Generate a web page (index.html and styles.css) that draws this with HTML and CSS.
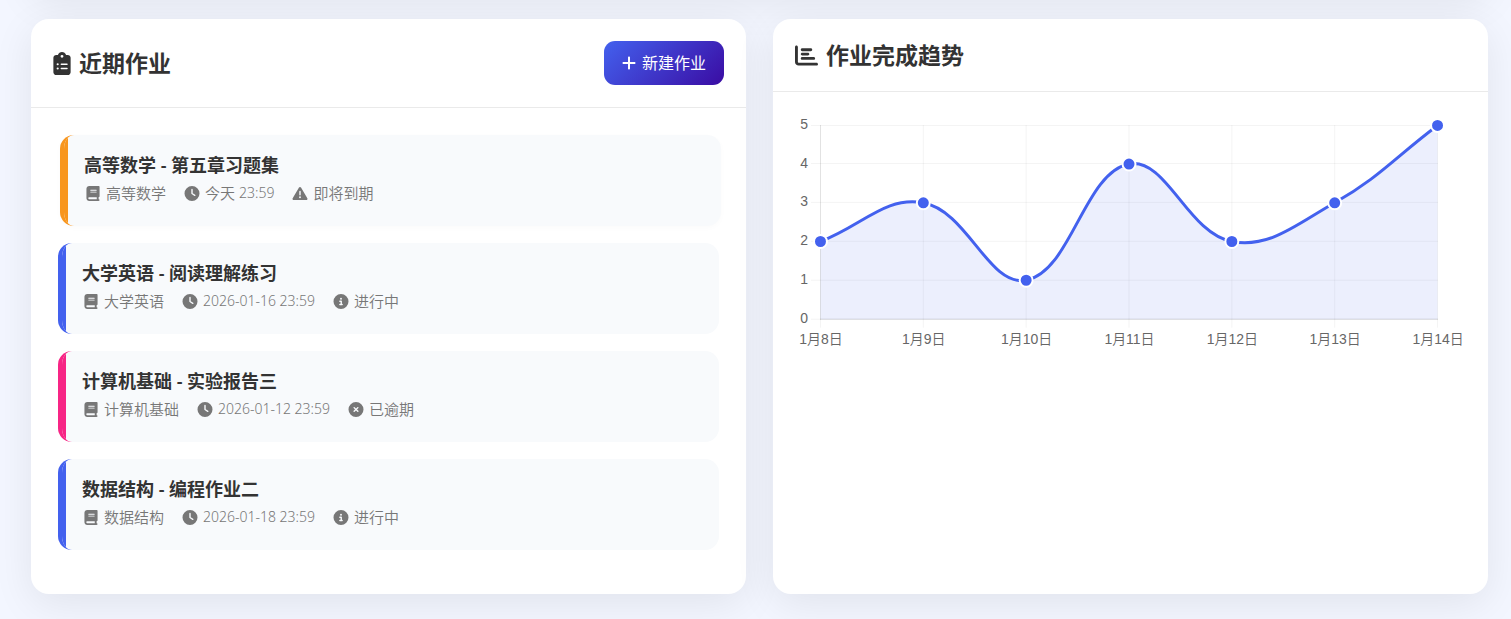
FILE: index.html
```html
<!DOCTYPE html>
<html lang="zh-CN">
<head>
<meta charset="utf-8">
<meta name="viewport" content="width=device-width, initial-scale=1">
<title>作业管理</title>
<link rel="stylesheet" href="styles.css">
</head>
<body>
<svg class="sprite" aria-hidden="true">
  <symbol id="i-book" viewBox="0 0 448 512"><path d="M96 0C43 0 0 43 0 96V416c0 53 43 96 96 96H384h32c17.7 0 32-14.3 32-32s-14.3-32-32-32V384c17.7 0 32-14.3 32-32V32c0-17.7-14.3-32-32-32H384 96zm0 384H352v64H96c-17.7 0-32-14.3-32-32s14.3-32 32-32zm32-240c0-8.8 7.2-16 16-16H336c8.8 0 16 7.2 16 16s-7.2 16-16 16H144c-8.8 0-16-7.2-16-16zm16 48H336c8.8 0 16 7.2 16 16s-7.2 16-16 16H144c-8.8 0-16-7.2-16-16s7.2-16 16-16z"/></symbol>
  <symbol id="i-clock" viewBox="0 0 512 512"><path d="M256 0a256 256 0 1 1 0 512A256 256 0 1 1 256 0zM232 120V256c0 8 4 15.500 10.700 20l96 64c11 7.400 25.900 4.400 33.300-6.700s4.400-25.900-6.700-33.300L280 243.200V120c0-13.300-10.700-24-24-24s-24 10.700-24 24z"/></symbol>
  <symbol id="i-warn" viewBox="0 0 512 512"><path d="M256 32c14.200 0 27.300 7.500 34.500 19.800l216 368c7.300 12.400 7.300 27.700 .2 40.100S486.300 480 472 480H40c-14.300 0-27.600-7.700-34.700-20.100s-7-27.800 .2-40.100l216-368C228.700 39.500 241.800 32 256 32zm0 128c-13.300 0-24 10.700-24 24V296c0 13.300 10.700 24 24 24s24-10.700 24-24V184c0-13.300-10.700-24-24-24zm32 224a32 32 0 1 0 -64 0 32 32 0 1 0 64 0z"/></symbol>
  <symbol id="i-info" viewBox="0 0 512 512"><path d="M256 512A256 256 0 1 0 256 0a256 256 0 1 0 0 512zM216 336h24V272H216c-13.300 0-24-10.700-24-24s10.700-24 24-24h48c13.300 0 24 10.700 24 24v88h8c13.300 0 24 10.700 24 24s-10.700 24-24 24H216c-13.300 0-24-10.700-24-24s10.700-24 24-24zm40-208a32 32 0 1 1 0 64 32 32 0 1 1 0-64z"/></symbol>
  <symbol id="i-xmark" viewBox="0 0 512 512"><path d="M256 512A256 256 0 1 0 256 0a256 256 0 1 0 0 512zM175 175c9.400-9.400 24.600-9.400 33.900 0l47 47 47-47c9.400-9.400 24.600-9.400 33.900 0s9.400 24.600 0 33.900l-47 47 47 47c9.400 9.400 9.400 24.600 0 33.900s-24.600 9.400-33.900 0l-47-47-47 47c-9.400 9.400-24.600 9.400-33.900 0s-9.400-24.600 0-33.900l47-47-47-47c-9.400-9.400-9.400-24.600 0-33.900z"/></symbol>
</svg>

<section class="previous-panel" aria-hidden="true"></section>

<main class="panels">
  <section class="card">
    <header class="card-header">
      <h2 class="card-title">
        <svg class="icon-clipboard" viewBox="0 0 384 512" aria-hidden="true"><path d="M192 0c-41.8 0-77.4 26.7-90.5 64H64C28.7 64 0 92.7 0 128V448c0 35.3 28.7 64 64 64H320c35.3 0 64-28.7 64-64V128c0-35.300-28.700-64-64-64H282.500C269.400 26.700 233.800 0 192 0zm0 64a32 32 0 1 1 0 64 32 32 0 1 1 0-64zM72 272a24 24 0 1 1 48 0 24 24 0 1 1 -48 0zm104-16H304c8.800 0 16 7.200 16 16s-7.200 16-16 16H176c-8.800 0-16-7.200-16-16s7.200-16 16-16zM72 368a24 24 0 1 1 48 0 24 24 0 1 1 -48 0zm88 0c0-8.800 7.200-16 16-16H304c8.800 0 16 7.200 16 16s-7.200 16-16 16H176c-8.800 0-16-7.200-16-16z"/></svg>
        近期作业
      </h2>
      <button class="btn-primary" type="button">
        <svg class="icon-plus" viewBox="0 32 448 448" aria-hidden="true"><path d="M256 80c0-17.700-14.300-32-32-32s-32 14.300-32 32V224H48c-17.700 0-32 14.300-32 32s14.300 32 32 32H192V432c0 17.700 14.300 32 32 32s32-14.300 32-32V288H400c17.700 0 32-14.300 32-32s-14.300-32-32-32H256V80z"/></svg>
        新建作业
      </button>
    </header>
    <ul class="homework-list">
      <li class="homework homework-urgent is-active">
        <h3 class="homework-title">高等数学 - 第五章习题集</h3>
        <div class="homework-meta">
          <span class="meta"><svg class="icon" aria-hidden="true"><use href="#i-book"/></svg>高等数学</span>
          <span class="meta"><svg class="icon" aria-hidden="true"><use href="#i-clock"/></svg>今天<time>23:59</time></span>
          <span class="meta"><svg class="icon" aria-hidden="true"><use href="#i-warn"/></svg>即将到期</span>
        </div>
      </li>
      <li class="homework">
        <h3 class="homework-title">大学英语 - 阅读理解练习</h3>
        <div class="homework-meta">
          <span class="meta"><svg class="icon" aria-hidden="true"><use href="#i-book"/></svg>大学英语</span>
          <span class="meta"><svg class="icon" aria-hidden="true"><use href="#i-clock"/></svg><time>2026-01-16 23:59</time></span>
          <span class="meta"><svg class="icon" aria-hidden="true"><use href="#i-info"/></svg>进行中</span>
        </div>
      </li>
      <li class="homework homework-overdue">
        <h3 class="homework-title">计算机基础 - 实验报告三</h3>
        <div class="homework-meta">
          <span class="meta"><svg class="icon" aria-hidden="true"><use href="#i-book"/></svg>计算机基础</span>
          <span class="meta"><svg class="icon" aria-hidden="true"><use href="#i-clock"/></svg><time>2026-01-12 23:59</time></span>
          <span class="meta"><svg class="icon" aria-hidden="true"><use href="#i-xmark"/></svg>已逾期</span>
        </div>
      </li>
      <li class="homework">
        <h3 class="homework-title">数据结构 - 编程作业二</h3>
        <div class="homework-meta">
          <span class="meta"><svg class="icon" aria-hidden="true"><use href="#i-book"/></svg>数据结构</span>
          <span class="meta"><svg class="icon" aria-hidden="true"><use href="#i-clock"/></svg><time>2026-01-18 23:59</time></span>
          <span class="meta"><svg class="icon" aria-hidden="true"><use href="#i-info"/></svg>进行中</span>
        </div>
      </li>
    </ul>
  </section>

  <section class="card">
    <header class="card-header">
      <h2 class="card-title">
        <svg class="icon-chart" viewBox="0 0 512 512" aria-hidden="true"><path d="M32 32c17.700 0 32 14.300 32 32V400c0 8.800 7.200 16 16 16H480c17.700 0 32 14.300 32 32s-14.300 32-32 32H80c-44.200 0-80-35.800-80-80V64C0 46.300 14.300 32 32 32zm96 96c0-17.700 14.300-32 32-32l192 0c17.700 0 32 14.300 32 32s-14.300 32-32 32l-192 0c-17.700 0-32-14.300-32-32zm32 64H288c17.700 0 32 14.300 32 32s-14.300 32-32 32H160c-17.700 0-32-14.300-32-32s14.300-32 32-32zm0 96H416c17.700 0 32 14.300 32 32s-14.300 32-32 32H160c-17.700 0-32-14.300-32-32s14.300-32 32-32z"/></svg>
        作业完成趋势
      </h2>
    </header>
    <div class="chart-body">
      <svg class="chart" viewBox="0 0 672 236" role="img" aria-label="作业完成趋势折线图">
        <path class="grid" d="M16 11.500H644M16 49.500H644M16 88.500H644M16 127.500H644M16 166.500H644M16 205.500H644M128.500 11V214M231.500 11V214M334.500 11V214M437.500 11V214M540.500 11V214M643.500 11V214M25.500 206V214"/>
        <path class="axis" d="M25.500 11V206M25 205.500H644"/>
        <path class="area" d="M25.500 127.700C66.700 112.200 90.600 81.800 128.500 88.900C173 97.300 194.100 173.500 231.500 166.500C276.500 158 289.500 58.600 334.500 50.100C371.900 43.100 393 119.300 437.500 127.700C475.400 134.800 502.600 110.300 540.500 88.900C585 63.800 602.300 42.300 643.500 11.500V205.500H25.500Z"/>
        <path class="line" d="M25.500 127.700C66.700 112.200 90.600 81.800 128.500 88.900C173 97.300 194.100 173.500 231.500 166.500C276.500 158 289.500 58.600 334.500 50.100C371.900 43.100 393 119.300 437.500 127.700C475.400 134.800 502.600 110.300 540.500 88.900C585 63.800 602.300 42.300 643.500 11.500"/>
        <g class="points">
          <circle cx="25.500" cy="127.700" r="6.500"/><circle cx="128.500" cy="88.900" r="6.500"/><circle cx="231.500" cy="166.500" r="6.500"/><circle cx="334.500" cy="50.100" r="6.500"/><circle cx="437.500" cy="127.700" r="6.500"/><circle cx="540.500" cy="88.900" r="6.500"/><circle cx="643.500" cy="11.500" r="6.500"/>
        </g>
        <g class="tick tick-y">
          <text x="13" y="15">5</text><text x="13" y="54">4</text><text x="13" y="92">3</text><text x="13" y="131">2</text><text x="13" y="170">1</text><text x="13" y="209">0</text>
        </g>
        <g class="tick tick-x">
          <text x="26" y="230">1月8日</text><text x="129" y="230">1月9日</text><text x="232" y="230">1月10日</text><text x="335" y="230">1月11日</text><text x="438" y="230">1月12日</text><text x="541" y="230">1月13日</text><text x="644" y="230">1月14日</text>
        </g>
      </svg>
    </div>
  </section>
</main>
</body>
</html>
```
FILE: styles.css
```css
:root {
  --primary: #4361ee;
  --primary-dark: #3a0ca3;
  --warning: #f8961e;
  --danger: #f72585;
  --text: #333;
  --muted: #777;
  --line: #eaeaea;
  --shadow: 0 10px 40px rgba(0, 0, 0, 0.08);
}

* {
  box-sizing: border-box;
}

body {
  margin: 0;
  padding: 0 23px 25px 31px;
  overflow-x: hidden;
  background: #f3f6ff;
  color: var(--text);
  font-family: "Noto Sans", "Noto Sans CJK SC", sans-serif;
}

.sprite {
  display: none;
}

/* Lower edge of the panel scrolled above the viewport */
.previous-panel {
  height: 72px;
  margin-top: -80px;
  border-radius: 18px;
  background: #fff;
  box-shadow: var(--shadow);
}

.panels {
  display: grid;
  grid-template-columns: 1fr 1fr;
  gap: 27px;
  margin-top: 27px;
}

.card {
  border-radius: 18px;
  background: #fff;
  box-shadow: var(--shadow);
}

.card-header {
  display: flex;
  align-items: center;
  justify-content: space-between;
  padding: 22px;
  border-bottom: 1px solid var(--line);
}

.card-title {
  display: flex;
  align-items: center;
  gap: 8px;
  margin: 0;
  font-size: 23px;
  font-weight: 600;
  line-height: 28px;
}

.icon-clipboard,
.icon-chart {
  height: 23px;
  fill: currentColor;
}

.icon-clipboard {
  width: 18px;
}

.icon-chart {
  width: 23px;
}

.btn-primary {
  display: flex;
  align-items: center;
  gap: 6px;
  padding: 10px 18px;
  border: 0;
  border-radius: 11px;
  background: linear-gradient(135deg, var(--primary), var(--primary-dark));
  color: #fff;
  font-family: inherit;
  font-size: 16px;
  font-weight: 400;
  line-height: 24px;
  cursor: pointer;
}

.icon-plus {
  width: 14px;
  height: 14px;
  fill: currentColor;
}

.homework-list {
  margin: 0;
  padding: 27px;
  list-style: none;
}

.homework {
  --accent: var(--primary);
  position: relative;
  overflow: hidden;
  margin-bottom: 17px;
  padding: 17px 16px 22px 20px;
  border-left: 4px solid var(--accent);
  border-radius: 14px;
  background: #f8fafc;
}

/* Second, straight-edged half of the accent bar */
.homework::before {
  content: "";
  position: absolute;
  top: 0;
  bottom: 0;
  left: 0;
  width: 4px;
  background: var(--accent);
}

.homework-urgent {
  --accent: var(--warning);
}

.homework-overdue {
  --accent: var(--danger);
}

.homework.is-active {
  transform: translateX(2px);
  box-shadow: 0 2px 6px rgba(0, 0, 0, 0.02);
}

.homework-title {
  margin: 0 0 4px;
  font-size: 18px;
  font-weight: 600;
  line-height: 26px;
}

.homework-meta {
  display: flex;
  flex-wrap: wrap;
  gap: 17px;
  color: var(--muted);
  font-size: 15px;
  font-weight: 350;
  line-height: 22px;
}

.homework-meta time {
  font-size: 14px;
}

.meta {
  display: flex;
  align-items: center;
  gap: 4px;
}

.icon {
  width: 18px;
  height: 15px;
  fill: currentColor;
}

.chart-body {
  padding: 22px;
}

.chart {
  display: block;
  width: 100%;
}

.grid {
  fill: none;
  stroke: rgba(0, 0, 0, 0.05);
}

.axis {
  fill: none;
  stroke: rgba(0, 0, 0, 0.12);
}

.area {
  fill: rgba(67, 97, 238, 0.1);
}

.line {
  fill: none;
  stroke: var(--primary);
  stroke-width: 3px;
}

.points {
  fill: var(--primary);
  stroke: #fff;
  stroke-width: 2px;
}

.tick {
  fill: #666;
  font-family: "Liberation Sans", "Noto Sans CJK SC", sans-serif;
  font-size: 14px;
}

.tick-y {
  text-anchor: end;
}

.tick-x {
  font-weight: 350;
  text-anchor: middle;
}
```
